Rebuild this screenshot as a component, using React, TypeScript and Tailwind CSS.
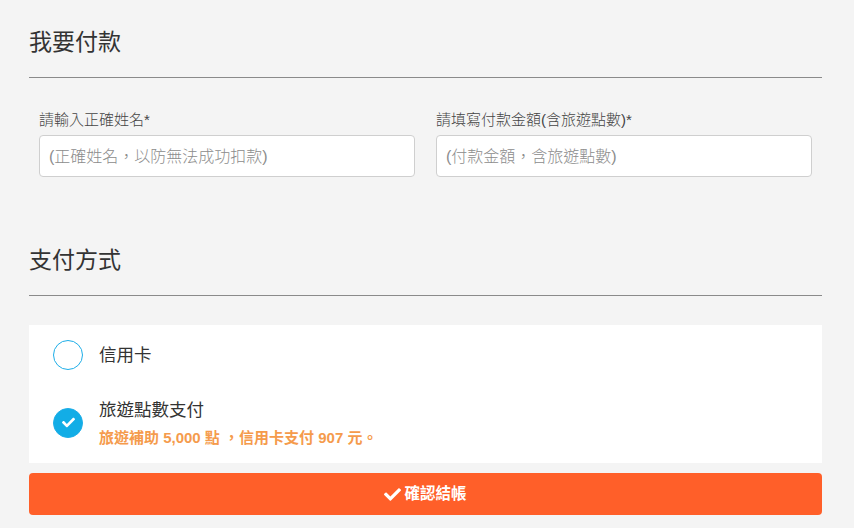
import React, { useState } from 'react';
import { FaCheck } from 'react-icons/fa';

const font = "font-['Liberation_Sans','Noto_Sans_CJK_TC',sans-serif]";

const App: React.FC = () => {
  const [method, setMethod] = useState<'card' | 'points'>('points');

  return (
    <div className={`min-h-[528px] w-full bg-[#f4f4f4] pl-[29px] pr-[32px] pt-[26px] text-[#333] ${font}`}>
      <h2 className="text-[23px] leading-[32px]">我要付款</h2>
      <div className="mt-[19px] h-px bg-[#8a8a8a]" />

      <div className="mt-[32px] grid grid-cols-2 gap-[21px] px-[10px]">
        <div>
          <label className="block text-[15px] font-light leading-[20px] text-[#444]">請輸入正確姓名*</label>
          <input
            className="mt-[5px] h-[42px] w-full rounded-[4px] border border-[#cfcfcf] bg-white px-[9px] pt-[2px] text-[16px] font-light outline-none placeholder:text-[#8c8c8c]"
            placeholder="(正確姓名，以防無法成功扣款)"
          />
        </div>
        <div>
          <label className="block text-[15px] font-light leading-[20px] text-[#444]">請填寫付款金額(含旅遊點數)*</label>
          <input
            className="mt-[5px] h-[42px] w-full rounded-[4px] border border-[#cfcfcf] bg-white px-[9px] pt-[2px] text-[16px] font-light outline-none placeholder:text-[#8c8c8c]"
            placeholder="(付款金額，含旅遊點數)"
          />
        </div>
      </div>

      <h2 className="mt-[67px] text-[23px] leading-[32px]">支付方式</h2>
      <div className="mt-[19px] h-px bg-[#8a8a8a]" />

      <div className="mt-[29px] bg-white px-[24px] pt-[15px] pb-[15px]">
        <button className="flex items-center gap-[16px]" onClick={() => setMethod('card')}>
          <span
            className={`flex h-[30px] w-[30px] items-center justify-center rounded-full border-[1.5px] border-[#1eaee8] ${
              method === 'card' ? 'bg-[#12ade6]' : 'bg-white'
            }`}
          >
            {method === 'card' && <FaCheck className="h-[13px] w-[13px] text-white" />}
          </span>
          <span className="text-[17.5px] leading-[28px]">信用卡</span>
        </button>

        <button className="mt-[27px] flex items-center gap-[16px] text-left" onClick={() => setMethod('points')}>
          <span
            className={`flex h-[30px] w-[30px] shrink-0 items-center justify-center rounded-full border-[1.5px] border-[#1eaee8] ${
              method === 'points' ? 'bg-[#12ade6]' : 'bg-white'
            }`}
          >
            {method === 'points' && <FaCheck className="h-[13px] w-[13px] text-white" />}
          </span>
          <span>
            <span className="block text-[17.5px] leading-[26px]">旅遊點數支付</span>
            <span className="mt-[5px] block text-[15px] font-bold leading-[20px] text-[#f59b4c]">
              旅遊補助 5,000 點 ，信用卡支付 907 元。
            </span>
          </span>
        </button>
      </div>

      <button className="mt-[10px] flex h-[42px] w-full items-center justify-center gap-[3px] rounded-[4px] bg-[#ff5f29] text-[15.5px] font-bold text-white">
        <FaCheck className="h-[17px] w-[17px]" />
        <span>確認結帳</span>
      </button>
    </div>
  );
};

export default App;
